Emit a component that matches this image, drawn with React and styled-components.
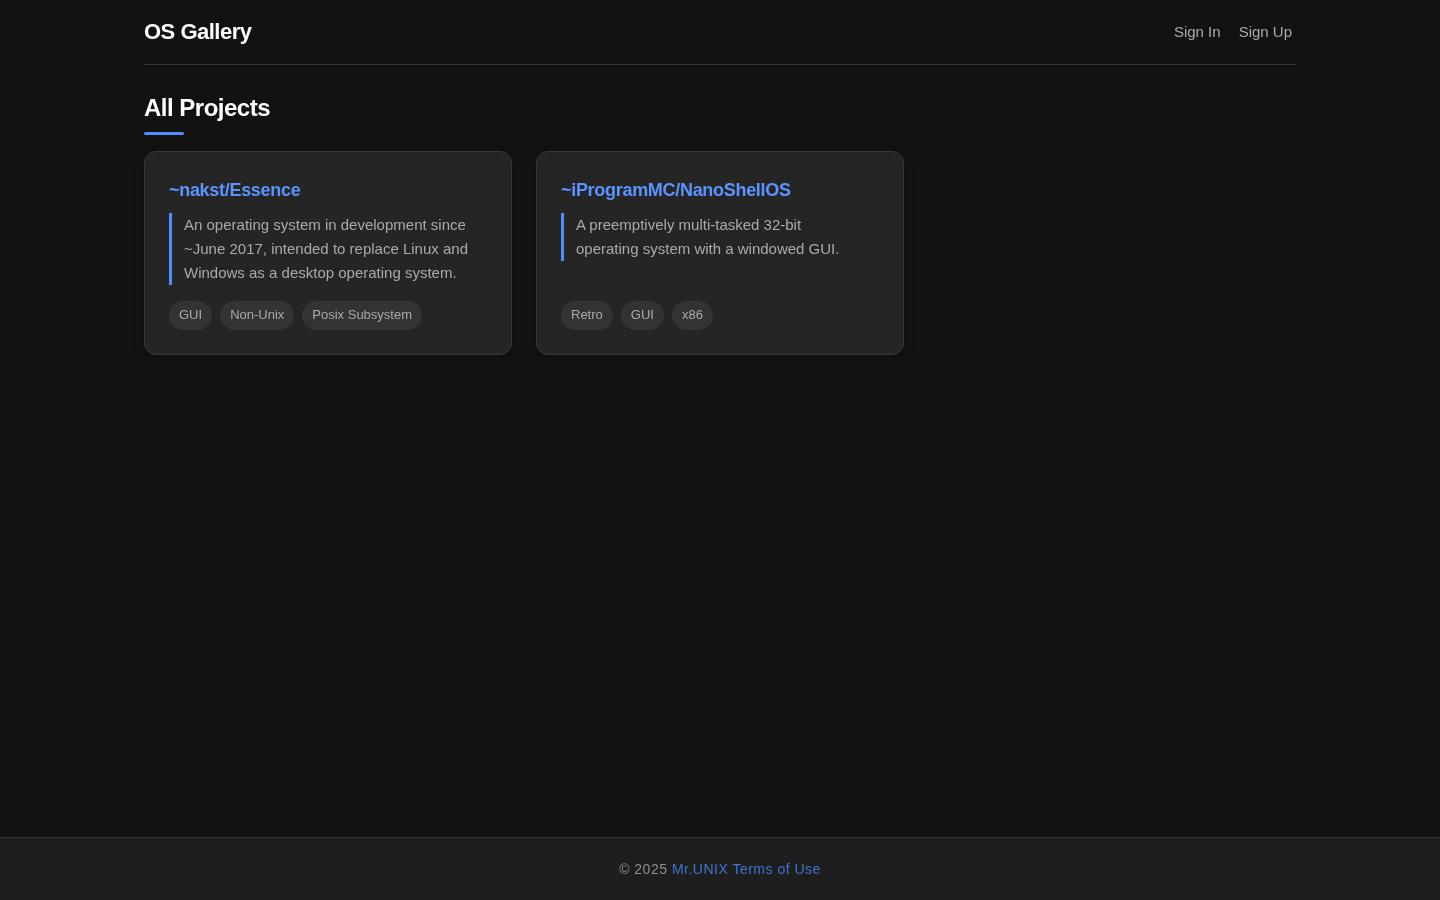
import styled, { createGlobalStyle } from "styled-components";

const GlobalStyle = createGlobalStyle`
  * {
    box-sizing: border-box;
  }
  body {
    margin: 0;
    background: #121212;
    color: #e0e0e0;
    font-family: Arial, "Liberation Sans", sans-serif;
  }
`;

const Page = styled.div`
  display: flex;
  flex-direction: column;
  min-height: 100vh;
  will-change: opacity;
`;

const Container = styled.div`
  flex: 1;
  width: 100%;
  max-width: 1200px;
  margin: 0 auto;
  padding: 0 24px;
`;

const Header = styled.header`
  display: flex;
  justify-content: space-between;
  align-items: center;
  height: 65px;
  border-bottom: 1px solid #333;
`;

const Logo = styled.a`
  color: #fff;
  font-size: 22px;
  font-weight: 700;
  letter-spacing: -0.5px;
`;

const Nav = styled.nav`
  display: flex;
  gap: 10px;
`;

const NavLink = styled.a`
  color: #aaa;
  font-size: 15px;
  padding: 3px 4px 4px;
`;

const Heading = styled.h1`
  position: relative;
  margin: 29px 0 19px;
  padding-bottom: 11px;
  color: #fff;
  font-size: 24px;
  line-height: 27px;
  font-weight: 700;
  letter-spacing: -0.5px;

  &::after {
    content: "";
    position: absolute;
    left: 0;
    bottom: -3px;
    width: 40px;
    height: 3px;
    border-radius: 2px;
    background: #4d8dff;
  }
`;

const Grid = styled.div`
  display: grid;
  grid-template-columns: repeat(3, 1fr);
  gap: 24px;
`;

const Card = styled.article`
  display: flex;
  flex-direction: column;
  padding: 24px;
  background: #252525;
  border: 1px solid #383838;
  border-radius: 12px;
  box-shadow: 0 4px 12px rgba(0, 0, 0, 0.2);
`;

const CardTitle = styled.a`
  color: #5b94ff;
  font-size: 18px;
  line-height: 28px;
  font-weight: 700;
  letter-spacing: -0.3px;
  margin-bottom: 9px;
`;

const Description = styled.p`
  flex: 1;
  margin: 0 0 16px;
`;

const DescriptionText = styled.span`
  display: block;
  border-left: 3px solid #4d8dff;
  padding: 0 16px 0 12px;
  color: #aaa;
  font-size: 15px;
  line-height: 24px;
`;

const Tags = styled.div`
  display: flex;
  gap: 8px;
`;

const Tag = styled.span`
  padding: 6px 10px 7px;
  background: #333;
  border-radius: 16px;
  color: #aaa;
  font-size: 13px;
  line-height: 16px;
`;

const Footer = styled.footer`
  height: 63px;
  padding-top: 23px;
  background: #1e1e1e;
  border-top: 1px solid #333;
`;

const FooterText = styled.p`
  margin: 0;
  color: #aaa;
  font-size: 14px;
  line-height: 16px;
  letter-spacing: 0.5px;
  text-align: center;
  opacity: 0.8;
`;

const FooterLink = styled.a`
  color: #4a86ff;
`;

const projects = [
  {
    name: "~nakst/Essence",
    text: "An operating system in development since ~June 2017, intended to replace Linux and Windows as a desktop operating system.",
    tags: ["GUI", "Non-Unix", "Posix Subsystem"],
  },
  {
    name: "~iProgramMC/NanoShellOS",
    text: "A preemptively multi-tasked 32-bit operating system with a windowed GUI.",
    tags: ["Retro", "GUI", "x86"],
  },
];

export default function App() {
  return (
    <Page>
      <GlobalStyle />
      <Container>
        <Header>
          <Logo>OS Gallery</Logo>
          <Nav>
            <NavLink>Sign In</NavLink>
            <NavLink>Sign Up</NavLink>
          </Nav>
        </Header>
        <Heading>All Projects</Heading>
        <Grid>
          {projects.map((project) => (
            <Card key={project.name}>
              <CardTitle>{project.name}</CardTitle>
              <Description>
                <DescriptionText>{project.text}</DescriptionText>
              </Description>
              <Tags>
                {project.tags.map((tag) => (
                  <Tag key={tag}>{tag}</Tag>
                ))}
              </Tags>
            </Card>
          ))}
        </Grid>
      </Container>
      <Footer>
        <FooterText>
          © 2025 <FooterLink>Mr.UNIX</FooterLink>{" "}
          <FooterLink>Terms of Use</FooterLink>
        </FooterText>
      </Footer>
    </Page>
  );
}
